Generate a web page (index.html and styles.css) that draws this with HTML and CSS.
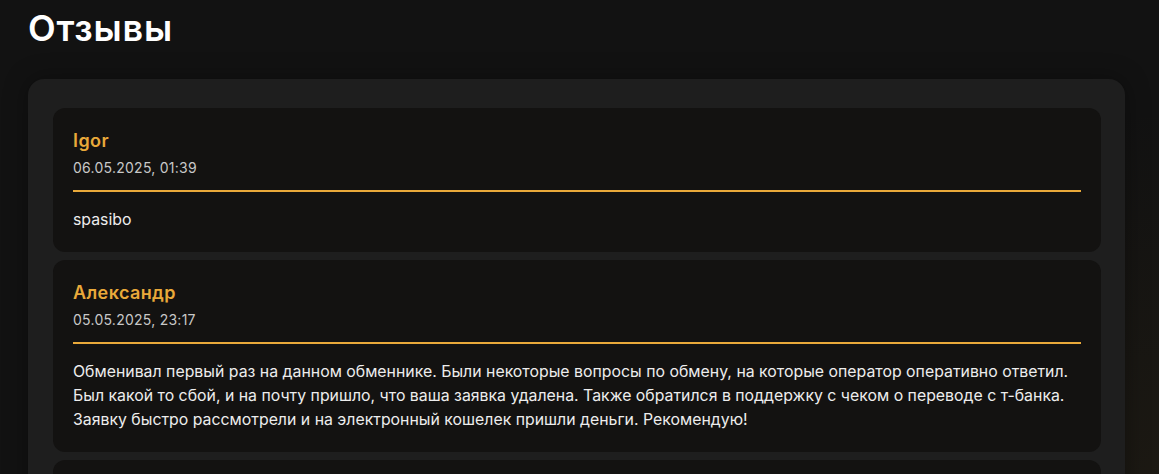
FILE: index.html
```html
<!DOCTYPE html>
<html lang="ru">
<head>
<meta charset="utf-8">
<title>Отзывы</title>
<link rel="stylesheet" href="styles.css">
</head>
<body>
<main class="page">
  <h1 class="page-title">Отзывы</h1>
  <section class="reviews">
    <article class="review">
      <header class="review-head">
        <div class="review-name">Igor</div>
        <div class="review-date">06.05.2025, 01:39</div>
      </header>
      <p class="review-text">spasibo</p>
    </article>
    <article class="review">
      <header class="review-head">
        <div class="review-name">Александр</div>
        <div class="review-date">05.05.2025, 23:17</div>
      </header>
      <p class="review-text">Обменивал первый раз на данном обменнике. Были некоторые вопросы по обмену, на которые оператор оперативно ответил. Был какой то сбой, и на почту пришло, что ваша заявка удалена. Также обратился в поддержку с чеком о переводе с т-банка. Заявку быстро рассмотрели и на электронный кошелек пришли деньги. Рекомендую!</p>
    </article>
    <article class="review review-empty"></article>
  </section>
</main>
</body>
</html>
```

FILE: styles.css
```css
* { box-sizing: border-box; }

html, body {
  margin: 0;
  height: 100%;
}

body {
  background-color: #121212;
  background-image: radial-gradient(ellipse 420px 520px at 100% 100%, rgba(120, 90, 30, 0.10), rgba(120, 90, 30, 0) 70%);
  font-family: Inter, "Noto Sans", "Liberation Sans", sans-serif;
  color: #ececec;
  overflow: hidden;
}

.page {
  padding: 6px 34px 0 28px;
}

.page-title {
  margin: 0 0 29px;
  font-size: 36px;
  line-height: 44px;
  font-weight: 600;
  color: #ffffff;
  letter-spacing: 0.8px;
}

.reviews {
  background: #1e1e1e;
  border-radius: 16px;
  padding: 29px 24px 24px 25px;
  display: flex;
  flex-direction: column;
  gap: 8px;
  box-shadow: 0 0 24px rgba(0, 0, 0, 0.35);
}

.review {
  background: #131211;
  border-radius: 12px;
  padding: 20px 20px 20px 20px;
}

.review-empty {
  min-height: 144px;
}

.review-head {
  padding-bottom: 12px;
  border-bottom: 2px solid #e9a93a;
  margin-bottom: 16px;
}

.review-name {
  font-size: 18px;
  line-height: 26px;
  font-weight: 600;
  color: #e9a93a;
  letter-spacing: 0.4px;
}

.review-date {
  margin-top: 4px;
  font-size: 14px;
  line-height: 20px;
  color: #c8c8c8;
  letter-spacing: 0.25px;
}

.review-text {
  margin: 0;
  font-size: 15.85px;
  line-height: 24px;
  color: #ededed;
}
```
